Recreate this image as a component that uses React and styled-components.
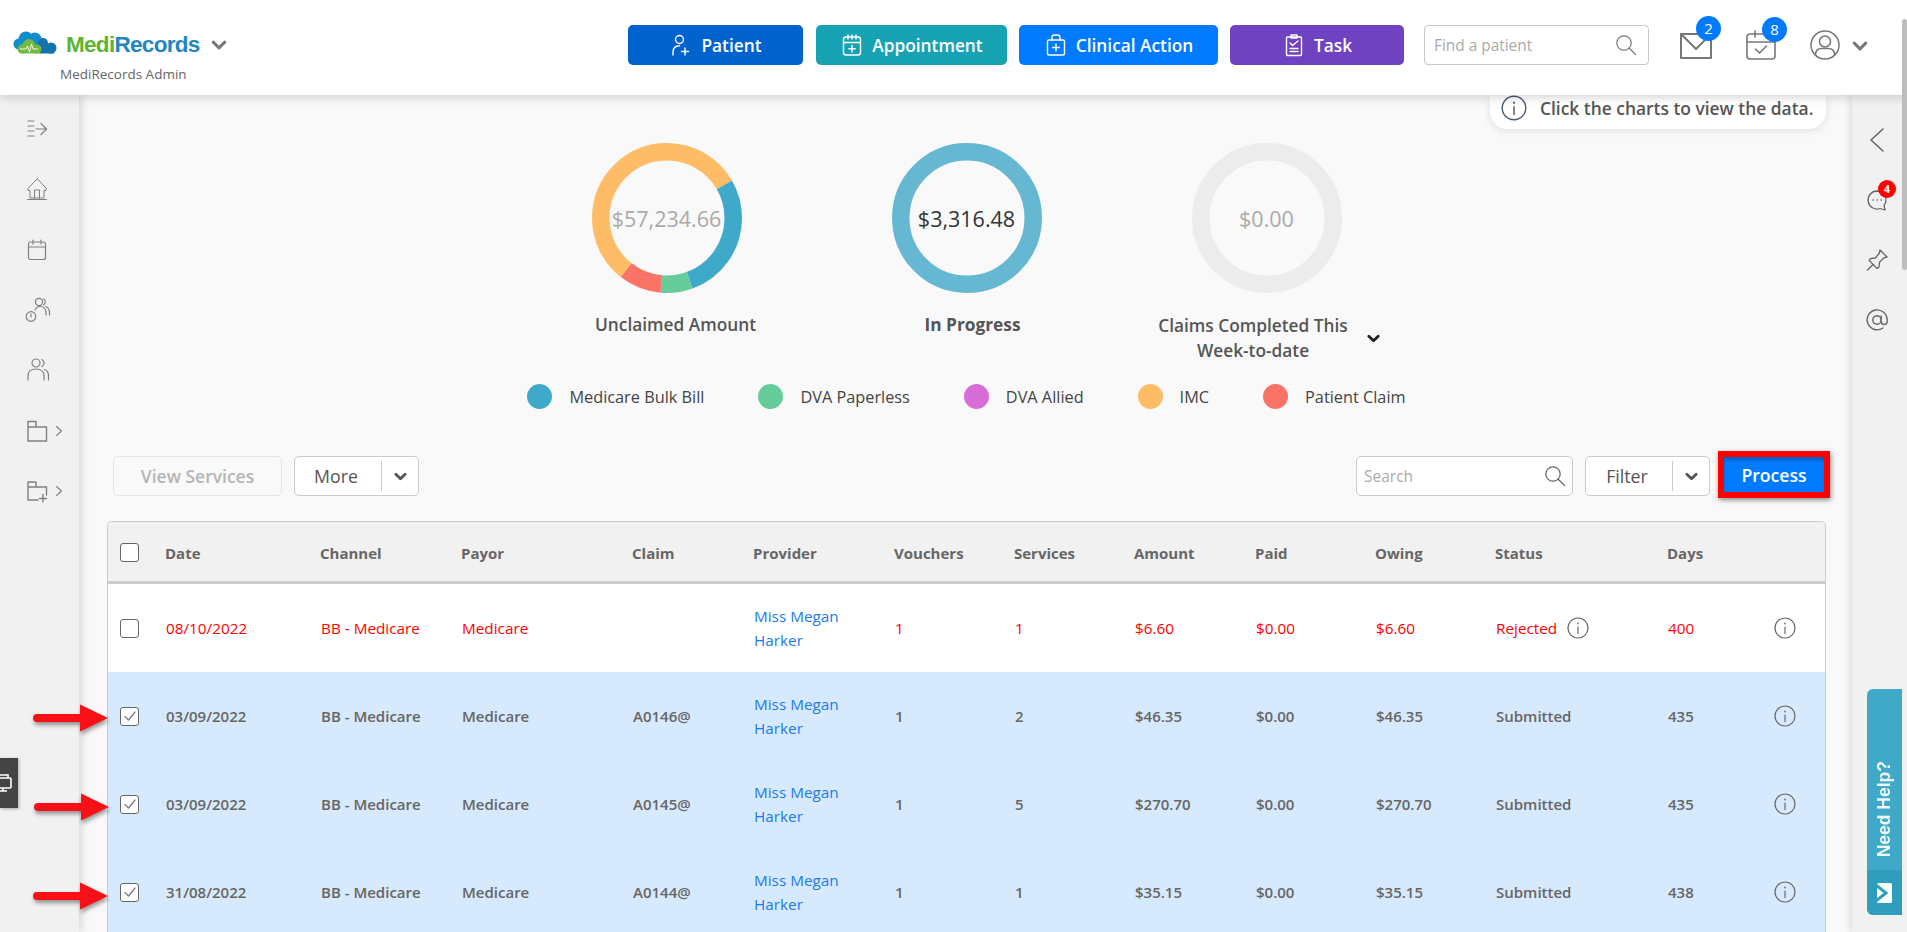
import React from 'react';
import styled, { createGlobalStyle } from 'styled-components';

const GlobalStyle = createGlobalStyle`
  html, body {
    margin: 0;
    height: 100%;
    overflow: hidden;
    background: #f9f9f9;
    font-family: 'Open Sans', 'Noto Sans', sans-serif;
  }
  * { box-sizing: border-box; }
`;

const Page = styled.div`
  position: relative;
  height: 932px;
  display: flex;
  flex-direction: column;
  overflow: hidden;
`;

const Header = styled.header`
  position: relative;
  z-index: 3;
  flex: 0 0 95px;
  display: flex;
  align-items: center;
  padding: 0 0 5px 13px;
  background: #fff;
  box-shadow: 0 2px 10px rgba(0, 0, 0, 0.18);
`;

const Brand = styled.div`
  align-self: flex-start;
  width: 215px;
  margin-top: 30px;
`;

const BrandRow = styled.div`
  display: flex;
  align-items: center;
  height: 30px;
  > svg { flex: none; margin-bottom: 5px; }
`;

const BrandName = styled.span`
  margin-left: 9px;
  font: 700 22.5px 'Liberation Sans', sans-serif;
  letter-spacing: -0.7px;
  color: #1f86c0;
  b { font-weight: 700; color: #5cb531; }
`;

const BrandChevron = styled.span`
  display: flex;
  margin-left: 11px;
  color: #777;
`;

const BrandSub = styled.div`
  margin: 6px 0 0 47px;
  font-size: 13.5px;
  font-weight: 500;
  line-height: 17px;
  color: #666;
  white-space: nowrap;
`;

const Actions = styled.div`
  display: flex;
  align-items: center;
  margin-left: 400px;
`;

const ActionButton = styled.button`
  display: flex;
  align-items: center;
  justify-content: center;
  gap: 8px;
  width: ${(p) => p.$w}px;
  height: 40px;
  margin-right: ${(p) => p.$gap}px;
  padding: 0;
  border: 0;
  border-radius: 5px;
  color: #fff;
  background: ${(p) => p.$bg};
  font: 600 17.3px 'Open Sans', sans-serif;
`;

const FindBox = styled.div`
  display: flex;
  align-items: center;
  justify-content: space-between;
  width: 225px;
  height: 40px;
  margin-left: 20px;
  padding: 0 11px 0 9px;
  border: 1px solid #c8c8c8;
  border-radius: 4px;
  color: #aaa;
  font-size: 15.4px;
  font-weight: 500;
  svg { color: #777; }
`;

const HeadIcon = styled.div`
  position: relative;
  display: flex;
  margin: ${(p) => p.$drop || 0}px 0 0 ${(p) => p.$left}px;
  color: #777;
`;

const Badge = styled.span`
  position: absolute;
  top: ${(p) => p.$top}px;
  right: ${(p) => p.$right}px;
  width: 25px;
  height: 25px;
  border-radius: 50%;
  background: #007bff;
  color: #fff;
  font-size: 15px;
  font-weight: 500;
  line-height: 25px;
  text-align: center;
`;

const Body = styled.div`
  flex: 1;
  display: flex;
  min-height: 0;
`;

const Sidebar = styled.nav`
  position: relative;
  z-index: 2;
  flex: 0 0 79px;
  padding-top: 4px;
  background: #f1f1f1;
  box-shadow: 3px 0 8px rgba(0, 0, 0, 0.13);
`;

const SideItem = styled.div`
  display: flex;
  align-items: center;
  gap: 4px;
  height: 60.3px;
  padding-left: 25px;
  color: #808080;
`;

const DeviceTab = styled.div`
  position: absolute;
  top: 663px;
  left: 0;
  width: 18px;
  height: 50px;
  overflow: hidden;
  background: #444;
  box-shadow: 1px 1px 3px rgba(0, 0, 0, 0.3);
  svg { margin: 15px 0 0 -6px; display: block; }
`;

const Main = styled.main`
  position: relative;
  flex: 1;
  min-width: 0;
  padding: 48px 26px 0 28px;
  overflow: hidden;
  background: #f9f9f9;
`;

const Hint = styled.div`
  position: absolute;
  top: 0;
  right: 26px;
  display: flex;
  gap: 13px;
  width: 336px;
  height: 34px;
  padding-left: 11px;
  border-radius: 0 0 17px 17px;
  background: #fff;
  box-shadow: 0 2px 8px rgba(0, 0, 0, 0.1);
  color: #555;
  font-size: 17.4px;
  font-weight: 600;
  line-height: 26px;
  white-space: nowrap;
  svg { color: #4a5a6a; flex: none; }
`;

const ChartRow = styled.div`
  display: flex;
  justify-content: center;
  height: 241px;
`;

const ChartCol = styled.div`
  display: flex;
  flex-direction: column;
  align-items: center;
  width: 300px;
`;

const RingWrap = styled.div`
  position: relative;
  width: 150px;
  height: 150px;
`;

const RingValue = styled.div`
  position: absolute;
  inset: 0;
  display: flex;
  align-items: center;
  justify-content: center;
  font-size: 21.5px;
  font-weight: 500;
  color: ${(p) => p.$color};
`;

const ChartLabel = styled.div`
  display: flex;
  align-items: center;
  gap: 19px;
  margin: ${(p) => p.$top}px 0 0 ${(p) => p.$left}px;
  color: #555;
  font-size: 17.3px;
  font-weight: ${(p) => (p.$bold ? 700 : 600)};
  line-height: 25px;
  text-align: center;
  white-space: nowrap;
  svg { color: #222; }
`;

const Legend = styled.div`
  display: flex;
  justify-content: center;
  gap: 54px;
  height: 25px;
`;

const LegendItem = styled.div`
  display: flex;
  align-items: center;
  gap: 17px;
  color: #444;
  font-size: 16.3px;
  font-weight: 500;
`;

const LegendDot = styled.span`
  width: 25px;
  height: 25px;
  border-radius: 50%;
  background: ${(p) => p.$color};
`;

const Toolbar = styled.div`
  display: flex;
  align-items: center;
  height: 40px;
  margin-top: 47px;
`;

const PlainButton = styled.div`
  display: flex;
  align-items: center;
  justify-content: center;
  width: 169px;
  height: 40px;
  margin-left: 6px;
  border: 1px solid #e4e4e4;
  border-radius: 5px;
  color: #b5b5b5;
  font-size: 17.5px;
  font-weight: 600;
`;

const SplitButton = styled.div`
  display: flex;
  align-items: center;
  width: ${(p) => p.$w}px;
  height: 40px;
  margin-left: ${(p) => p.$left}px;
  border: 1px solid #ccc;
  border-radius: 5px;
  background: #fff;
  color: #555;
  font-size: 17.8px;
  font-weight: 500;
`;

const SplitLabel = styled.span`
  flex: 1;
  padding-right: 4px;
  text-align: center;
`;

const SplitArrow = styled.span`
  display: flex;
  align-items: center;
  justify-content: center;
  width: 37px;
  height: 30px;
  border-left: 1px solid #ccc;
  color: #555;
`;

const SearchBox = styled.div`
  display: flex;
  align-items: center;
  justify-content: space-between;
  width: 217px;
  height: 40px;
  margin-left: auto;
  padding: 0 6px 0 7px;
  border: 1px solid #ccc;
  border-radius: 5px;
  background: #fff;
  color: #aaa;
  font-size: 15.5px;
  font-weight: 500;
  svg { color: #666; }
`;

const ProcessButton = styled.button`
  width: 112px;
  height: 47px;
  margin: -5px -4px -2px 8px;
  padding: 0;
  border: 6px solid #f00;
  background: #007bff;
  color: #fff;
  box-shadow: 1px 2px 5px rgba(0, 0, 0, 0.45), inset 0 4px 5px -2px rgba(0, 0, 0, 0.35);
  font: 600 17.6px 'Open Sans', sans-serif;
`;

const Table = styled.div`
  margin-top: 25px;
  border: 1px solid #ccc;
  border-bottom: 0;
  border-radius: 5px 5px 0 0;
  overflow: hidden;
`;

const columnsAfterBox = '155px 141px 171px 121px 141px 120px 120px 121px 120px 120px 172px';

const HeadRow = styled.div`
  display: grid;
  grid-template-columns: 57px ${columnsAfterBox} 118px 1fr;
  align-items: center;
  height: 62px;
  padding-top: 2px;
  border-bottom: 3px solid #ccc;
  background: #f1f1f1;
  color: #666;
  font-size: 15px;
  font-weight: 700;
`;

const DataRow = styled.div`
  display: grid;
  grid-template-columns: 58px ${columnsAfterBox} 106px 1fr;
  align-items: center;
  height: 88px;
  background: ${(p) => (p.$alert ? '#fff' : '#d7e9fc')};
  color: ${(p) => (p.$alert ? '#f00' : '#666')};
  font-size: ${(p) => (p.$alert ? 15.3 : 15)}px;
  font-weight: ${(p) => (p.$alert ? 500 : 600)};
`;

const BoxCell = styled.div`
  display: flex;
  padding-left: 12px;
`;

const CheckBox = styled.span`
  display: flex;
  align-items: center;
  justify-content: center;
  width: 19px;
  height: 19px;
  border: 1px solid #666;
  border-radius: 3px;
  background: #fff;
  color: #777;
`;

const ProviderLink = styled.a`
  display: block;
  width: 110px;
  color: #1a7bf2;
  font-size: 15.3px;
  font-weight: 500;
  line-height: 24px;
`;

const StatusCell = styled.div`
  display: flex;
  align-items: center;
  gap: 10px;
  svg { color: #666; }
`;

const InfoCell = styled.div`
  display: flex;
  color: #666;
`;

const RightPanel = styled.aside`
  position: relative;
  z-index: 2;
  flex: 0 0 55px;
  padding: 15px 5px 0 0;
  background: #f1f1f1;
  box-shadow: -3px 0 6px rgba(0, 0, 0, 0.1);
`;

const PanelItem = styled.div`
  position: relative;
  display: flex;
  align-items: center;
  justify-content: center;
  height: 60px;
  color: #666;
`;

const PanelBadge = styled.span`
  position: absolute;
  top: 10px;
  right: 6px;
  width: 18px;
  height: 18px;
  border-radius: 50%;
  background: #f00;
  color: #fff;
  font-size: 10.5px;
  font-weight: 700;
  line-height: 18px;
  text-align: center;
`;

const HelpTab = styled.div`
  position: absolute;
  top: 594px;
  right: 5px;
  display: flex;
  flex-direction: column;
  justify-content: flex-end;
  align-items: center;
  width: 35px;
  height: 226px;
  overflow: hidden;
  border-radius: 6px 0 0 6px;
  background: #40a9c8;
`;

const HelpText = styled.span`
  margin-bottom: 13px;
  writing-mode: vertical-rl;
  transform: rotate(180deg);
  color: #eef8fb;
  font: 700 17.5px 'Liberation Sans', sans-serif;
  white-space: nowrap;
`;

const HelpIcon = styled.div`
  display: flex;
  align-items: center;
  justify-content: center;
  width: 100%;
  flex: 0 0 45px;
  background: #2f9dbc;
`;

const ScrollThumb = styled.div`
  position: absolute;
  z-index: 4;
  top: 19px;
  right: 0;
  width: 5px;
  height: 251px;
  border-radius: 3px;
  background: #bdbdbd;
`;

const Marker = styled.svg`
  position: absolute;
  z-index: 5;
  left: ${(p) => p.$x}px;
  top: ${(p) => p.$y}px;
  filter: drop-shadow(1px 3px 2px rgba(0, 0, 0, 0.4));
`;

const Icon = ({ size = 24, w, h, box = '0 0 24 24', sw = 1.2, children }) => (
  <svg
    width={w || size}
    height={h || size}
    viewBox={box}
    fill='none'
    stroke='currentColor'
    strokeWidth={sw}
    strokeLinecap='round'
    strokeLinejoin='round'
  >
    {children}
  </svg>
);

const Chevron = ({ size = 13, sw = 3 }) => (
  <Icon size={size} sw={sw} box='0 0 14 14'><path d='M2 4.5 7 9.5 12 4.5' /></Icon>
);

const ChevronRight = () => (
  <Icon size={12} sw={1.1} box='0 0 12 12'><path d='M3.5 1.5 8.5 6 3.5 10.5' /></Icon>
);

const Info = ({ size = 22 }) => (
  <Icon size={size} box='0 0 22 22' sw={1.2}>
    <circle cx='11' cy='11' r='10' />
    <path d='M11 10v6.5' />
    <path d='M11 6.2v.6' strokeWidth='1.6' />
  </Icon>
);

const Search = () => (
  <Icon size={22} box='0 0 22 22' sw={1.2}>
    <circle cx='9' cy='9' r='7.2' />
    <path d='m14 14 6.5 6.5' />
  </Icon>
);

const Logo = () => (
  <svg width='44' height='23' viewBox='0 0 44 23'>
    <g fill='#128ccf'>
      <circle cx='6' cy='13' r='5.5' />
      <circle cx='13' cy='8' r='7.5' />
      <circle cx='22' cy='8' r='6.5' />
      <rect x='5' y='10' width='24' height='9' />
    </g>
    <g fill='#1273ad'>
      <circle cx='30' cy='12' r='5' />
      <circle cx='38' cy='17' r='5.5' />
      <rect x='26' y='15' width='15' height='7.500' />
    </g>
    <g fill='#73b93f'>
      <circle cx='9' cy='18' r='4.500' />
      <circle cx='16' cy='14.500' r='6.500' />
      <circle cx='24' cy='18' r='4.500' />
      <rect x='9' y='17' width='16' height='5.500' />
    </g>
    <path fill='none' stroke='#fff' strokeWidth='.9' d='M7 18h6l1.500-3 2 6 2-8 1.500 5h5' />
  </svg>
);

const UserPlus = () => (
  <Icon sw={1.4}>
    <circle cx='10.5' cy='6.5' r='4' />
    <path d='M4 22v-3c0-4 3-6 6.5-6.2' />
    <path d='M16 15v7M12.5 18.5h7' />
  </Icon>
);

const CalPlus = () => (
  <Icon sw={1.4}>
    <rect x='3.5' y='4' width='17' height='18' rx='2.5' />
    <path d='M3.5 9.5h17M8 2v4M12 2v4M16 2v4M12 12.5v6.5M8.8 15.8h6.4' />
  </Icon>
);

const MedBag = () => (
  <Icon sw={1.4}>
    <rect x='3.5' y='7' width='17' height='15' rx='1.5' />
    <path d='M8 7V4.5C8 3 9 2 10.5 2h3C15 2 16 3 16 4.5V7M12 11v7M8.5 14.5h7' />
  </Icon>
);

const ClipCheck = () => (
  <Icon sw={1.4}>
    <rect x='4.5' y='4' width='15' height='18.5' rx='1' />
    <path d='M9 2h6v3H9zM8 10l2.5 2.5L16 8M8 15.5h8M8 18.5h8' />
  </Icon>
);

const ListArrow = () => (
  <Icon>
    <path d='M3 4h6M3 9h6M3 14h6M3 19h6M11 12h10M16 6.5l5.5 5.5-5.5 5.5' />
  </Icon>
);

const Home = () => (
  <Icon sw={1}>
    <path d='M12 2 3 11.5v2h2V21h14v-7.5h2v-2zM2.5 22.5h19M9.5 21v-8h5v8' />
  </Icon>
);

const Calendar = () => (
  <Icon>
    <rect x='3.5' y='4' width='17' height='17.5' rx='2' />
    <path d='M3.5 9h17M8 2v4M16 2v4' />
  </Icon>
);

const UsersClock = () => (
  <Icon size={26} box='0 0 26 26'>
    <circle cx='14' cy='5' r='3.6' />
    <path d='M18.5 1.8a3.6 3.6 0 0 1 0 6.2M10 13c1-2.5 3-3.5 5-3.5 3.5 0 6 2.5 6 6.5v2M20.5 9.5c2.5.8 4 3 4 6.5v2' />
    <circle cx='6' cy='19.5' r='4.8' />
    <path d='M6 17v3' />
  </Icon>
);

const Users = () => (
  <Icon size={26} box='0 0 26 26'>
    <circle cx='11' cy='6' r='4' />
    <path d='M17 2.5a4 4 0 0 1 0 7M3 23v-4c0-4.5 3.5-7 8-7s8 2.5 8 7v4M19.5 12.5c2.5.8 4 3 4 6.5v4' />
  </Icon>
);

const Folder = () => (
  <Icon sw={1.4}>
    <path d='M3 22V2.5h8V8h10.5v14zM3 8h8' />
  </Icon>
);

const FolderPlus = () => (
  <Icon sw={1.4}>
    <path d='M13 21H3V3h8v5h10.5v8M3 8h8M18 15.5v7.5M14.5 19.5h7' />
  </Icon>
);

const Mail = () => (
  <Icon w={32} h={26} box='0 0 32 26' sw={2}>
    <path d='M1 1h30v24H1zM1 1l15 15L31 1' />
  </Icon>
);

const CalCheck = () => (
  <Icon w={30} h={30} box='0 0 30 30' sw={1.6}>
    <rect x='1' y='4' width='28' height='25' rx='3' />
    <path d='M1 12h28M9 1v6M20 1v6M9.5 19l4 4 7-7' />
  </Icon>
);

const UserCircle = () => (
  <Icon size={30} box='0 0 30 30' sw={1.5}>
    <circle cx='15' cy='15' r='14' />
    <circle cx='15' cy='11.5' r='5.5' />
    <path d='M5.5 25c0-5 3-6.5 6-6.5h7c3 0 6 1.5 6 6.5' />
  </Icon>
);

const ChatDots = () => (
  <Icon sw={1.3}>
    <path d='M12 3a9 9 0 1 0 3 17.5l5 1.5-1-4.5A9 9 0 0 0 12 3z' />
    <path d='M8 12h.4M12 12h.4M16 12h.4' />
  </Icon>
);

const Pin = () => (
  <Icon sw={1.3}>
    <path d='M15 2 22 9l-3 .8-4.5 4.5-.6 5-2 1-7.7-7.7 1-2 5-.6L14.2 5.5z' />
    <path d='M8 16.5 2.5 22' />
  </Icon>
);

const AtSign = () => (
  <Icon sw={1.4}>
    <circle cx='12' cy='12' r='4.2' />
    <path d='M16.2 8v5.5a3 3 0 0 0 6 0V12A10 10 0 1 0 18 20' />
  </Icon>
);

const Ring = ({ segments }) => (
  <svg width='150' height='150' viewBox='0 0 150 150'>
    {segments.map((s) => (
      <circle
        key={s.color}
        cx='75'
        cy='75'
        r='66.25'
        fill='none'
        stroke={s.color}
        strokeWidth='17.5'
        pathLength='360'
        strokeDasharray={`${s.to - s.from} 360`}
        strokeDashoffset={-s.from}
        transform='rotate(-90 75 75)'
      />
    ))}
  </svg>
);

const RedArrow = ({ x, y }) => (
  <Marker $x={x} $y={y} width='76' height='30' viewBox='0 0 76 30'>
    <path fill='#f91016' d='M4 11h43V1.5L75 15 47 28.5V19H4a4 4 0 0 1 0-8z' />
  </Marker>
);

const legend = [
  { label: 'Medicare Bulk Bill', color: '#3fa9c9' },
  { label: 'DVA Paperless', color: '#66cc99' },
  { label: 'DVA Allied', color: '#d96dd8' },
  { label: 'IMC', color: '#ffbc66' },
  { label: 'Patient Claim', color: '#f97366' },
];

const heads = ['Date', 'Channel', 'Payor', 'Claim', 'Provider', 'Vouchers', 'Services', 'Amount', 'Paid', 'Owing', 'Status', 'Days'];

const rows = [
  { date: '08/10/2022', claim: '', vouchers: 1, services: 1, amount: '$6.60', status: 'Rejected', days: 400, alert: true },
  { date: '03/09/2022', claim: 'A0146@', vouchers: 1, services: 2, amount: '$46.35', status: 'Submitted', days: 435 },
  { date: '03/09/2022', claim: 'A0145@', vouchers: 1, services: 5, amount: '$270.70', status: 'Submitted', days: 435 },
  { date: '31/08/2022', claim: 'A0144@', vouchers: 1, services: 1, amount: '$35.15', status: 'Submitted', days: 438 },
];

const App = () => (
  <Page>
    <GlobalStyle />
    <ScrollThumb />
    <RedArrow x={33} y={703} />
    <RedArrow x={34} y={792} />
    <RedArrow x={33} y={881} />

    <Header>
      <Brand>
        <BrandRow>
          <Logo />
          <BrandName><b>Medi</b>Records</BrandName>
          <BrandChevron><Chevron size={16} sw={2.6} /></BrandChevron>
        </BrandRow>
        <BrandSub>MediRecords Admin</BrandSub>
      </Brand>
      <Actions>
        <ActionButton $w={175} $gap={13} $bg='#0062cc'><UserPlus />Patient</ActionButton>
        <ActionButton $w={191} $gap={12} $bg='#18a3b5'><CalPlus />Appointment</ActionButton>
        <ActionButton $w={199} $gap={12} $bg='#007bff'><MedBag />Clinical Action</ActionButton>
        <ActionButton $w={174} $gap={0} $bg='#6f42c1'><ClipCheck />Task</ActionButton>
        <FindBox>Find a patient<Search /></FindBox>
        <HeadIcon $left={31} $drop={2}><Mail /><Badge $top={-17} $right={-9}>2</Badge></HeadIcon>
        <HeadIcon $left={34}><CalCheck /><Badge $top={-13} $right={-11}>8</Badge></HeadIcon>
        <HeadIcon $left={34}><UserCircle /></HeadIcon>
        <HeadIcon $left={12} $drop={2}><Chevron size={16} sw={2.6} /></HeadIcon>
      </Actions>
    </Header>

    <Body>
      <Sidebar>
        <SideItem><ListArrow /></SideItem>
        <SideItem><Home /></SideItem>
        <SideItem><Calendar /></SideItem>
        <SideItem><UsersClock /></SideItem>
        <SideItem><Users /></SideItem>
        <SideItem><Folder /><ChevronRight /></SideItem>
        <SideItem><FolderPlus /><ChevronRight /></SideItem>
        <DeviceTab>
          <svg width='20' height='20' viewBox='0 0 20 20' fill='none' stroke='#fff' strokeWidth='1.6'>
            <path d='M5 5V2h9v3' />
            <rect x='1' y='5' width='16' height='10' rx='1' />
            <path d='M9 15v3M5 18h8' />
          </svg>
        </DeviceTab>
      </Sidebar>

      <Main>
        <Hint><Info size={26} />Click the charts to view the data.</Hint>

        <ChartRow>
          <ChartCol>
            <RingWrap>
              <Ring
                segments={[
                  { color: '#ffbc66', from: 218, to: 420 },
                  { color: '#ffbc67', from: 0, to: 60 },
                  { color: '#3fa9c9', from: 60, to: 160 },
                  { color: '#66cc99', from: 160, to: 185 },
                  { color: '#f97366', from: 185, to: 218 },
                ]}
              />
              <RingValue $color='#aaa'>$57,234.66</RingValue>
            </RingWrap>
            <ChartLabel $top={19} $left={18}>Unclaimed Amount</ChartLabel>
          </ChartCol>
          <ChartCol>
            <RingWrap>
              <Ring segments={[{ color: '#66b8d2', from: 0, to: 360 }]} />
              <RingValue $color='#333'>$3,316.48</RingValue>
            </RingWrap>
            <ChartLabel $top={19} $left={12} $bold>In Progress</ChartLabel>
          </ChartCol>
          <ChartCol>
            <RingWrap>
              <Ring segments={[{ color: '#ececec', from: 0, to: 360 }]} />
              <RingValue $color='#aaa'>$0.00</RingValue>
            </RingWrap>
            <ChartLabel $top={20} $left={5}>
              <span>Claims Completed This<br />Week-to-date</span>
              <Chevron />
            </ChartLabel>
          </ChartCol>
        </ChartRow>

        <Legend>
          {legend.map((l) => (
            <LegendItem key={l.label}><LegendDot $color={l.color} />{l.label}</LegendItem>
          ))}
        </Legend>

        <Toolbar>
          <PlainButton>View Services</PlainButton>
          <SplitButton $w={125} $left={12}>
            <SplitLabel>More</SplitLabel>
            <SplitArrow><Chevron /></SplitArrow>
          </SplitButton>
          <SearchBox>Search<Search /></SearchBox>
          <SplitButton $w={125} $left={12}>
            <SplitLabel>Filter</SplitLabel>
            <SplitArrow><Chevron /></SplitArrow>
          </SplitButton>
          <ProcessButton>Process</ProcessButton>
        </Toolbar>

        <Table>
          <HeadRow>
            <BoxCell><CheckBox /></BoxCell>
            {heads.map((h) => <div key={h}>{h}</div>)}
            <div />
          </HeadRow>
          {rows.map((r, i) => (
            <DataRow key={i} $alert={r.alert}>
              <BoxCell>
                <CheckBox>
                  {!r.alert && (
                    <Icon size={14} box='0 0 14 14'><path d='M2 7.5 5.5 11 12 3' /></Icon>
                  )}
                </CheckBox>
              </BoxCell>
              <div>{r.date}</div>
              <div>BB - Medicare</div>
              <div>Medicare</div>
              <div>{r.claim}</div>
              <ProviderLink>Miss Megan Harker</ProviderLink>
              <div>{r.vouchers}</div>
              <div>{r.services}</div>
              <div>{r.amount}</div>
              <div>$0.00</div>
              <div>{r.amount}</div>
              <StatusCell>{r.status}{r.alert && <Info />}</StatusCell>
              <div>{r.days}</div>
              <InfoCell><Info /></InfoCell>
            </DataRow>
          ))}
        </Table>
      </Main>

      <RightPanel>
        <PanelItem>
          <Icon w={16} h={26} box='0 0 16 26' sw={1.6}><path d='M14 2 2 13l12 11' /></Icon>
        </PanelItem>
        <PanelItem><ChatDots /><PanelBadge>4</PanelBadge></PanelItem>
        <PanelItem><Pin /></PanelItem>
        <PanelItem><AtSign /></PanelItem>
        <HelpTab>
          <HelpText>Need Help?</HelpText>
          <HelpIcon>
            <svg width='15' height='20' viewBox='0 0 15 20'>
              <rect width='15' height='20' rx='1.5' fill='#fff' />
              <path d='M-1 2 9 10-1 18' fill='none' stroke='#2f9dbc' strokeWidth='3' />
            </svg>
          </HelpIcon>
        </HelpTab>
      </RightPanel>
    </Body>
  </Page>
);

export default App;
